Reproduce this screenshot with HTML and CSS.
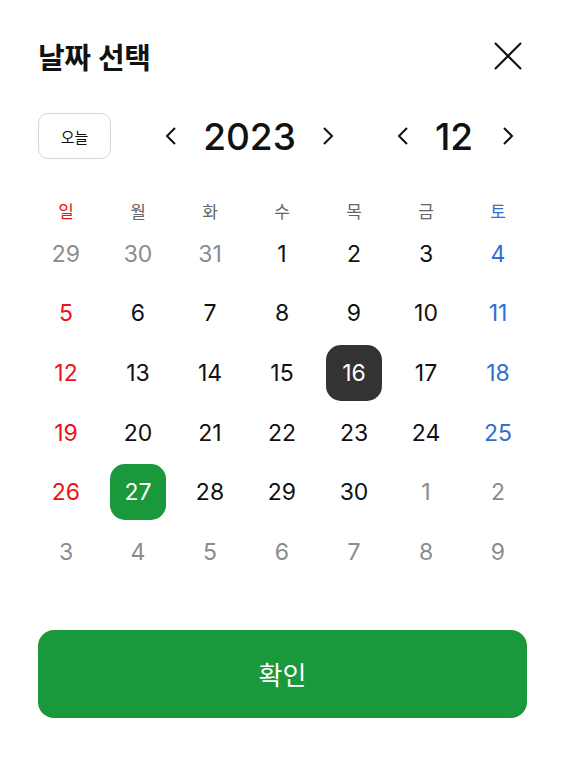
FILE: index.html
```html
<!DOCTYPE html>
<html lang="ko">
<head>
<meta charset="utf-8">
<link rel="stylesheet" href="styles.css">
</head>
<body>
<div class="sheet">
  <div class="title-row">
    <h1 class="title">날짜 선택</h1>
    <button class="close" aria-label="닫기">
      <svg width="30" height="30" viewBox="0 0 30 30"><path d="M2 2 L28 28 M28 2 L2 28" stroke="#111" stroke-width="2.2" fill="none"/></svg>
    </button>
  </div>
  <div class="nav-row">
    <button class="today">오늘</button>
    <div class="nav year">
      <span class="chev"><svg width="12" height="18" viewBox="0 0 12 18"><path d="M10 1 L2 9 L10 17" stroke="#111" stroke-width="2" fill="none"/></svg></span>
      <span class="val">2023</span>
      <span class="chev"><svg width="12" height="18" viewBox="0 0 12 18"><path d="M2 1 L10 9 L2 17" stroke="#111" stroke-width="2" fill="none"/></svg></span>
    </div>
    <div class="nav month">
      <span class="chev"><svg width="12" height="18" viewBox="0 0 12 18"><path d="M10 1 L2 9 L10 17" stroke="#111" stroke-width="2" fill="none"/></svg></span>
      <span class="val">12</span>
      <span class="chev"><svg width="12" height="18" viewBox="0 0 12 18"><path d="M2 1 L10 9 L2 17" stroke="#111" stroke-width="2" fill="none"/></svg></span>
    </div>
  </div>
  <div class="grid">
    <div class="wd sun">일</div><div class="wd">월</div><div class="wd">화</div><div class="wd">수</div><div class="wd">목</div><div class="wd">금</div><div class="wd sat">토</div>

    <div class="d muted"><span>29</span></div><div class="d muted"><span>30</span></div><div class="d muted"><span>31</span></div><div class="d"><span>1</span></div><div class="d"><span>2</span></div><div class="d"><span>3</span></div><div class="d sat"><span>4</span></div>

    <div class="d sun"><span>5</span></div><div class="d"><span>6</span></div><div class="d"><span>7</span></div><div class="d"><span>8</span></div><div class="d"><span>9</span></div><div class="d"><span>10</span></div><div class="d sat"><span>11</span></div>

    <div class="d sun"><span>12</span></div><div class="d"><span>13</span></div><div class="d"><span>14</span></div><div class="d"><span>15</span></div><div class="d selected"><span>16</span></div><div class="d"><span>17</span></div><div class="d sat"><span>18</span></div>

    <div class="d sun"><span>19</span></div><div class="d"><span>20</span></div><div class="d"><span>21</span></div><div class="d"><span>22</span></div><div class="d"><span>23</span></div><div class="d"><span>24</span></div><div class="d sat"><span>25</span></div>

    <div class="d sun"><span>26</span></div><div class="d today-mark"><span>27</span></div><div class="d"><span>28</span></div><div class="d"><span>29</span></div><div class="d"><span>30</span></div><div class="d muted"><span>1</span></div><div class="d muted"><span>2</span></div>

    <div class="d muted"><span>3</span></div><div class="d muted"><span>4</span></div><div class="d muted"><span>5</span></div><div class="d muted"><span>6</span></div><div class="d muted"><span>7</span></div><div class="d muted"><span>8</span></div><div class="d muted"><span>9</span></div>
  </div>
  <button class="confirm">확인</button>
</div>
</body>
</html>
```

FILE: styles.css
```css
* { box-sizing: border-box; }
html, body { margin: 0; padding: 0; background: #fff; }
body {
  font-family: "Inter", "Noto Sans CJK KR", sans-serif;
  color: #111;
  width: 565px;
}
.sheet {
  padding: 36px 38px 0 38px;
  display: flex;
  flex-direction: column;
}
.title-row {
  display: flex;
  align-items: center;
  justify-content: space-between;
  height: 40px;
}
.title {
  margin: 0;
  font-family: "Noto Sans CJK KR", sans-serif;
  font-size: 29px;
  font-weight: 700;
  letter-spacing: -0.5px;
  color: #111;
  line-height: 40px;
}
.close {
  border: 0;
  background: none;
  padding: 0;
  margin-right: 4px;
  width: 30px;
  height: 30px;
  display: flex;
}
.nav-row {
  display: flex;
  align-items: center;
  margin-top: 37px;
  height: 46px;
}
.today {
  width: 73px;
  height: 46px;
  border: 1px solid #d4d4d4;
  border-radius: 10px;
  background: #fff;
  font-family: "Noto Sans CJK KR", sans-serif;
  font-size: 15px;
  color: #111;
  padding: 0;
}
.nav {
  display: flex;
  align-items: center;
}
.nav .chev { display: flex; }
.val {
  font-size: 37px;
  font-weight: 500;
  color: #111;
  text-align: center;
  white-space: nowrap;
}
.year { margin-left: 54px; }
.year .val { width: 93px; margin: 0 26px; }
.month { margin-left: 63px; }
.month .val { width: 40px; margin: 0 28px 0 25px; }
.grid {
  margin: 39px -7px 0 -8px;
  display: grid;
  grid-template-columns: repeat(7, 72px);
  grid-auto-rows: 59.6px;
  grid-template-rows: 26px;
}
.wd {
  font-family: "Noto Sans CJK KR", sans-serif;
  font-size: 17px;
  color: #666;
  text-align: center;
  line-height: 26px;
  height: 26px;
}
.d {
  display: flex;
  align-items: center;
  justify-content: center;
  font-size: 23px;
  color: #111;
}
.d span {
  width: 56px;
  height: 56px;
  display: flex;
  align-items: center;
  justify-content: center;
  border-radius: 15px;
}
.sun, .d.sun { color: #ee1111; }
.sat, .d.sat { color: #2f6fd3; }
.d.muted { color: #8c8c8c; }
.d.selected span { background: #333; color: #fff; }
.d.today-mark span { background: #1a983c; color: #fff; }
.confirm {
  margin-top: 48px;
  height: 88px;
  width: 489px;
  border: 0;
  border-radius: 16px;
  background: #1a983c;
  color: #fff;
  font-family: "Noto Sans CJK KR", sans-serif;
  font-size: 26px;
  font-weight: 400;
}
```
